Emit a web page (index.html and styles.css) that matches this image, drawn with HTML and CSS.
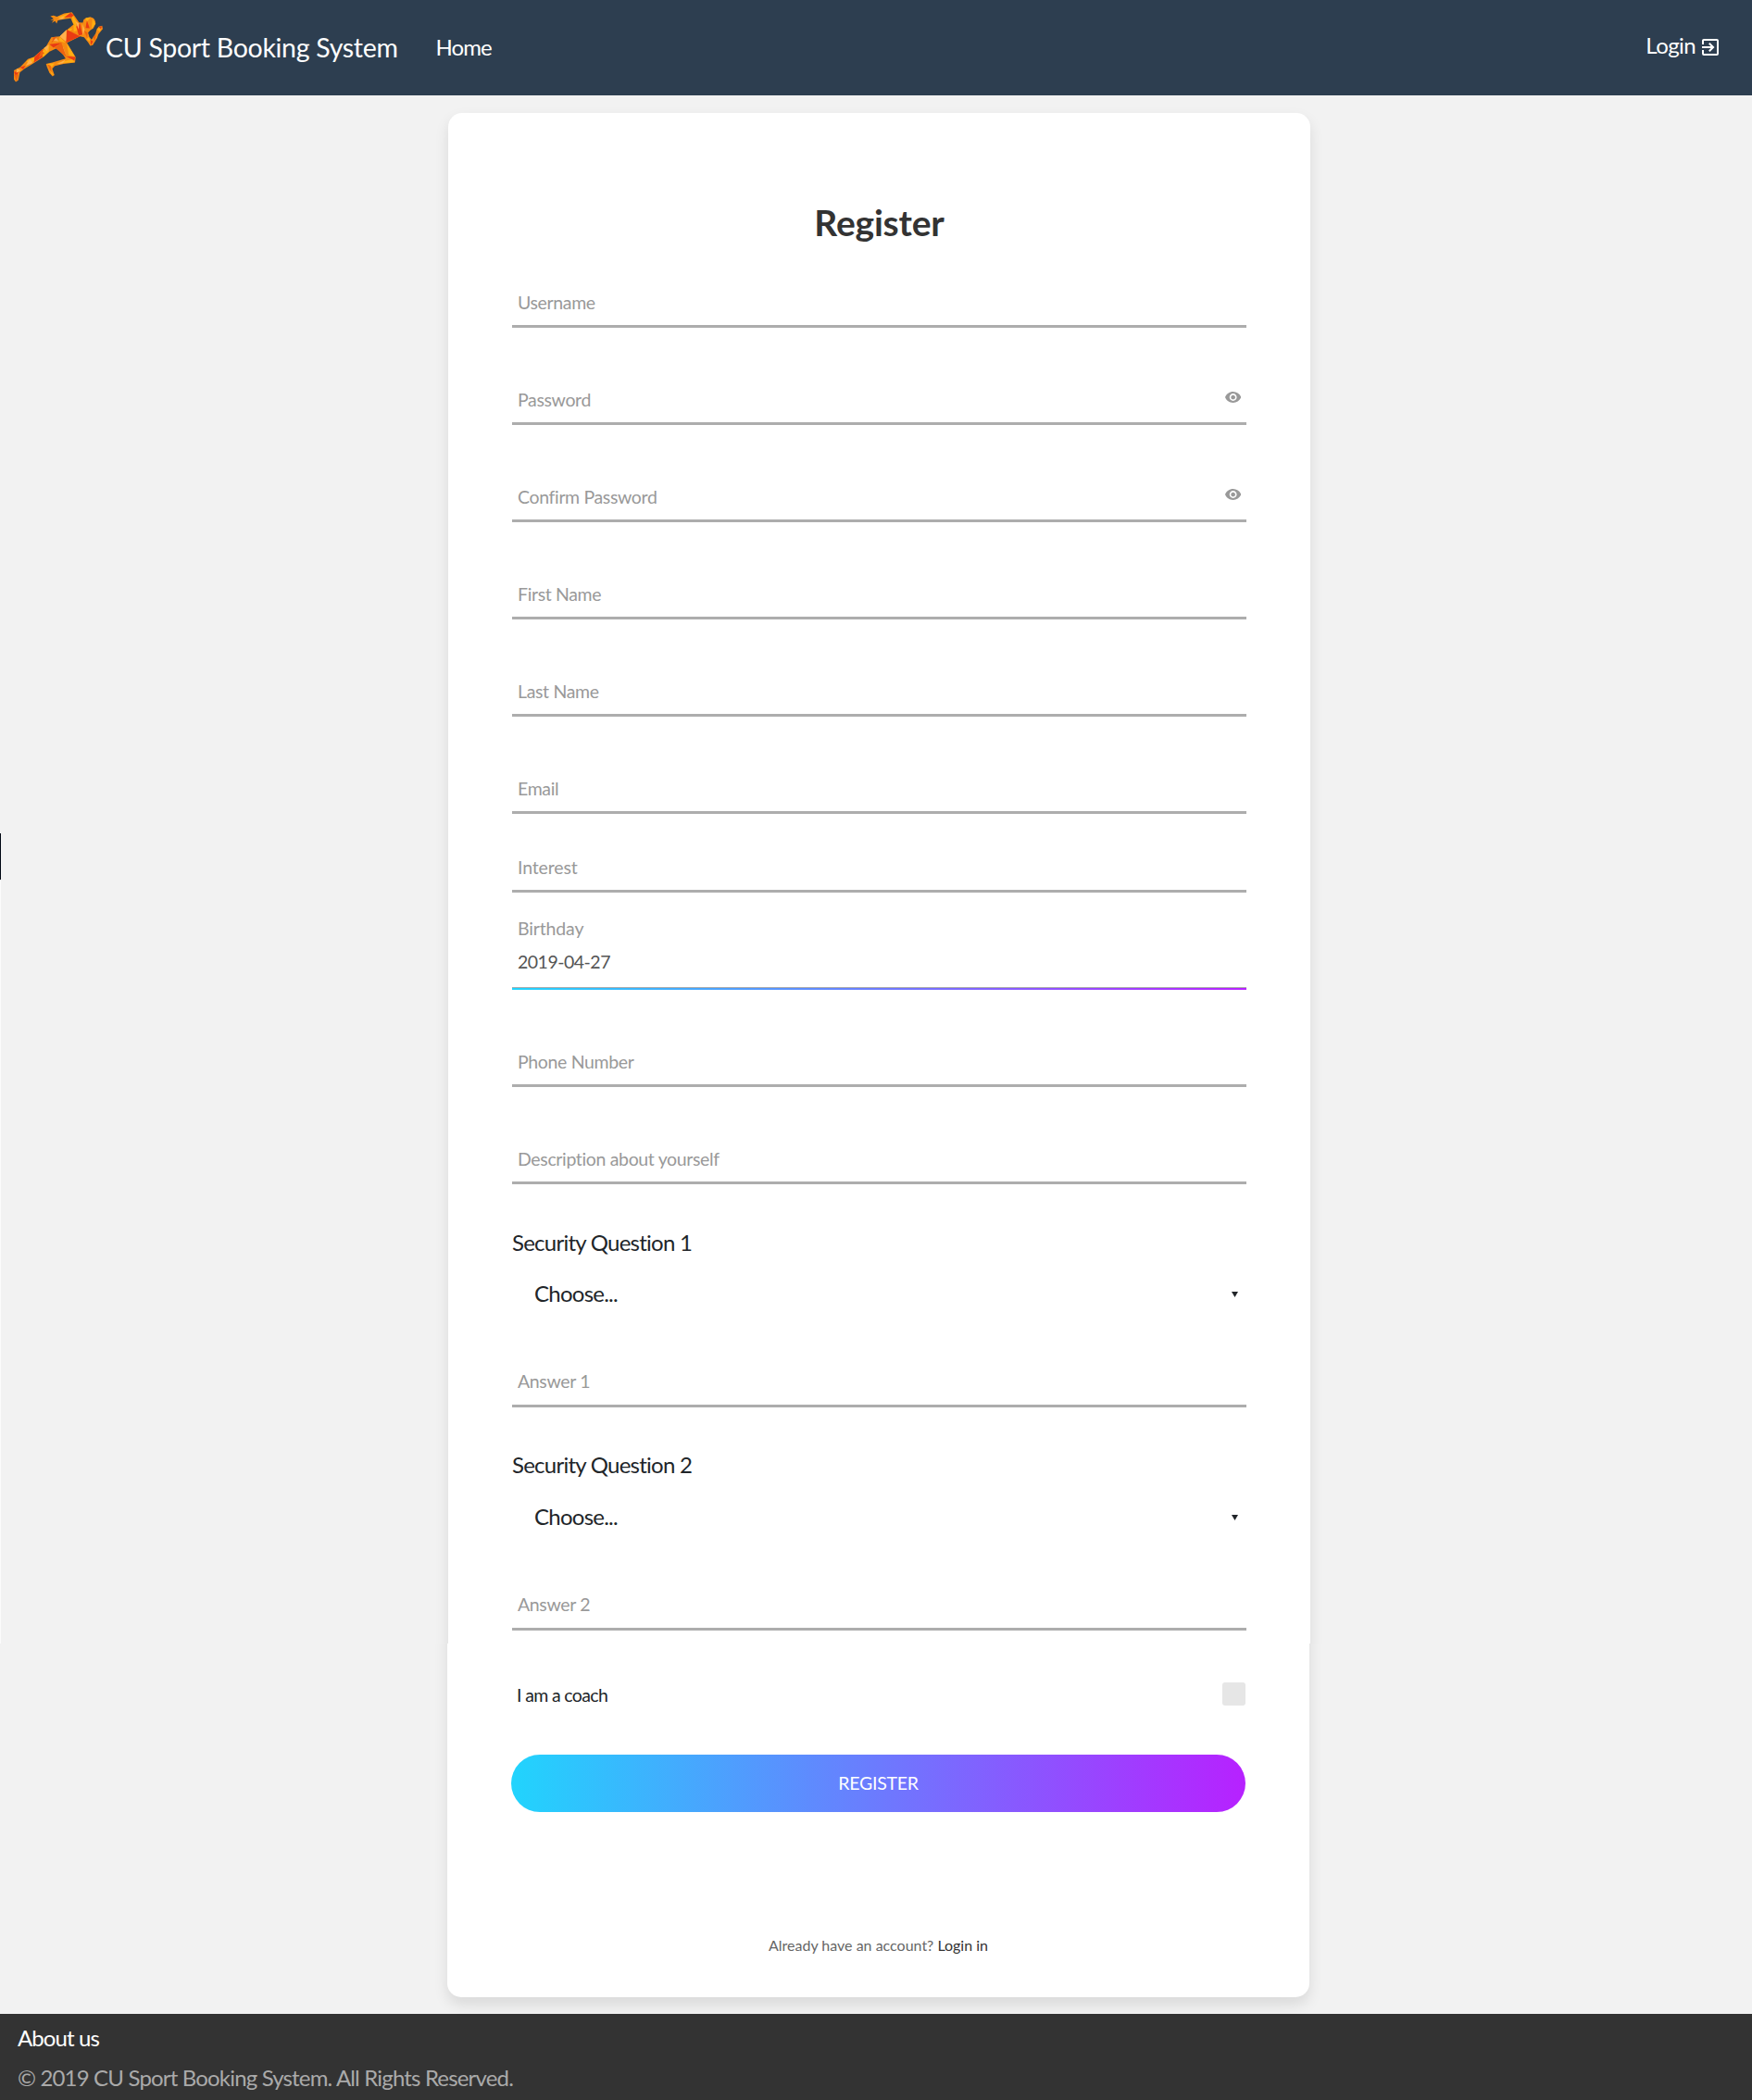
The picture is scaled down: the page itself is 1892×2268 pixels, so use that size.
FILE: index.html
```
<!DOCTYPE html>
<html lang="en">
<head>
<meta charset="utf-8">
<title>CU Sport Booking System - Register</title>
<link rel="stylesheet" href="styles.css">
</head>
<body>
<header class="navbar">
  <svg class="logo" viewBox="40 30 300 240" aria-hidden="true">
    <path fill="#f58a12" d="M163 52L173 50L184 54L207 43L232 40L239 49L255 72L267 73L270 63Q278 54 292 55Q308 58 308 76L301 91L290 98L284 105L288 119L295 127L308 108L312 94L318 86L329 83L331 93L317 110L313 122L299 145L291 147L284 136L271 120L258 117L216 138L244 184L242 201L205 205L177 212L169 221L176 241L170 245L160 234L152 215L149 205L169 201L212 188L204 176L184 155L160 166L141 183L101 208L80 221L65 233L60 258L52 263L46 255L46 226L66 216L91 190L110 183L150 148L166 120L193 117L220 93L237 79L228 59L206 62L187 66L183 76L178 68L167 74L174 64L163 66L173 60Z"/>
    <path fill="#ffae12" d="M186 55L228 41L206 61ZM232 44L246 68L246 90L234 70ZM237 80L258 96L238 102ZM220 94L236 91L215 110ZM276 58L292 56L277 74ZM298 60L308 76L295 94ZM286 119L294 137L279 126ZM312 94L326 86L322 103ZM160 143L158 166L141 182L132 172ZM193 118L212 138L190 132ZM216 140L242 182L222 177ZM110 184L120 193L93 205L86 196ZM180 204L235 190L240 200ZM152 205L176 204L168 216ZM160 224L175 242L167 239Z"/>
    <path fill="#e93b13" d="M216 95L258 117L213 137ZM258 75L266 111L254 114L246 86ZM228 41L239 49L231 55L207 56ZM160 142L199 138L173 153ZM138 158L137 183L110 201L112 184ZM66 216L83 211L76 223ZM213 181L243 183L240 195ZM291 128L300 133L293 145ZM318 87L329 84L324 93ZM280 65L289 91L276 90ZM46 230L61 233L52 247Z"/>
    <path fill="#ffb04e" d="M193 117L215 95L213 134ZM166 130L179 119L190 133ZM204 151L213 178L183 154ZM142 155L158 143L153 165ZM243 68L255 76L254 95ZM266 77L273 95L267 114ZM97 190L106 202L84 211ZM184 206L212 192L202 204ZM56 220L68 226L54 234ZM186 61L207 52L202 62Z"/>
    <path fill="#ee6410" d="M198 137L215 184L177 153ZM172 119L184 118L166 139ZM133 163L144 170L126 187ZM271 98L282 105L281 123ZM300 119L309 111L305 132ZM47 240L61 239L54 262ZM154 207L164 211L166 232Z"/>
  </svg>
  <a class="brand">CU Sport Booking System</a>
  <a class="nav-link">Home</a>
  <a class="login">Login
    <svg class="login-icon" viewBox="0 0 24 24"><path fill="currentColor" d="M19,3H5C3.89,3 3,3.89 3,5V9H5V5H19V19H5V15H3V19A2,2 0 0,0 5,21H19A2,2 0 0,0 21,19V5C21,3.89 20.1,3 19,3M10.08,15.58L11.5,17L16.5,12L11.5,7L10.08,8.41L12.67,11H3V13H12.67L10.08,15.58Z"/></svg>
  </a>
</header>
<div class="edge-handle"></div>
<main class="page">
  <section class="card card-main">
    <h1 class="title">Register</h1>
    <div class="field first"><span>Username</span></div>
    <div class="field"><span>Password</span>
      <svg class="eye" viewBox="1 4.5 22 15"><path fill="currentColor" d="M12 4.5C7 4.5 2.73 7.61 1 12c1.73 4.39 6 7.5 11 7.5s9.27-3.11 11-7.5c-1.73-4.39-6-7.5-11-7.5zM12 17c-2.76 0-5-2.24-5-5s2.24-5 5-5 5 2.24 5 5-2.24 5-5 5zm0-8c-1.66 0-3 1.34-3 3s1.34 3 3 3 3-1.34 3-3-1.34-3-3-3z"/></svg></div>
    <div class="field"><span>Confirm Password</span>
      <svg class="eye" viewBox="1 4.5 22 15"><path fill="currentColor" d="M12 4.5C7 4.5 2.73 7.61 1 12c1.73 4.39 6 7.5 11 7.5s9.27-3.11 11-7.5c-1.73-4.39-6-7.5-11-7.5zM12 17c-2.76 0-5-2.24-5-5s2.24-5 5-5 5 2.24 5 5-2.24 5-5 5zm0-8c-1.66 0-3 1.34-3 3s1.34 3 3 3 3-1.34 3-3-1.34-3-3-3z"/></svg></div>
    <div class="field"><span>First Name</span></div>
    <div class="field"><span>Last Name</span></div>
    <div class="field"><span>Email</span></div>
    <div class="field tight"><span>Interest</span></div>
    <div class="birthday">
      <span class="birthday-label">Birthday</span>
      <span class="birthday-value">2019-04-27</span>
      <div class="focus-line"></div>
    </div>
    <div class="field"><span>Phone Number</span></div>
    <div class="field"><span>Description about yourself</span></div>
    <div class="question">
      <span class="question-label">Security Question 1</span>
      <div class="select"><span>Choose...</span><svg class="caret" viewBox="0 0 7 6"><path d="M0 0H7L3.5 6Z"/></svg></div>
      <div class="field answer"><span>Answer 1</span></div>
    </div>
    <div class="question second">
      <span class="question-label">Security Question 2</span>
      <div class="select"><span>Choose...</span><svg class="caret" viewBox="0 0 7 6"><path d="M0 0H7L3.5 6Z"/></svg></div>
      <div class="field answer"><span>Answer 2</span></div>
    </div>
  </section>
  <section class="card card-end">
    <div class="coach"><span class="coach-label">I am a coach</span><span class="checkbox"></span></div>
    <button class="submit">REGISTER</button>
    <p class="account">Already have an account? <a class="account-link">Login in</a></p>
  </section>
</main>
<footer class="footer">
  <a class="about">About us</a>
  <span class="copyright">© 2019 CU Sport Booking System. All Rights Reserved.</span>
</footer>
</body>
</html>
```
FILE: styles.css
```
* { box-sizing: border-box; }
body {
  margin: 0;
  height: 2268px;
  display: flex;
  flex-direction: column;
  background: #f2f2f2;
  color: #212529;
  font: 24px/36px Lato, "Liberation Sans", sans-serif;
  letter-spacing: -.75px;
}
.navbar {
  height: 103px;
  display: flex;
  align-items: center;
  padding: 0 36px 2px 13px;
  background: #2d3e50;
  color: #fff;
}
.logo { width: 101px; height: 80.8px; }
.brand { font-size: 28.5px; letter-spacing: -.3px; }
.nav-link { margin-left: 41px; letter-spacing: -1px; }
.login {
  display: flex;
  align-items: center;
  gap: 4px;
  margin-left: auto;
  margin-right: -3px;
  padding-bottom: 4px;
  letter-spacing: -.6px;
}
.login-icon { width: 24px; height: 24px; margin-top: 4px; }

/* Sliver of the side panel showing at the window edge */
.edge-handle {
  position: absolute;
  left: 0;
  top: 900px;
  width: 1px;
  height: 875px;
  background: linear-gradient(#000814 50px, #fcfcfc 50px);
}

.page { height: 2072px; padding: 19px 0 0 484px; }

/* Each card section runs 60px past the joint and is clipped there,
   so the side shadows keep full strength along the whole height */
.card {
  width: 931px;
  background: #fff;
  box-shadow: 0 7.5px 15px rgba(0, 0, 0, .1);
}
.card-main {
  height: 1713px;
  padding: 88px 69px 0;
  border-radius: 15px 15px 0 0;
  clip-path: inset(-30px -30px 60px -30px);
}
.card-end {
  height: 442px;
  margin: -120px 0 0 -1px;
  padding: 102px 69px 0;
  border-radius: 0 0 15px 15px;
  clip-path: inset(60px -30px -30px -30px);
}
.title {
  margin: 0;
  color: #333;
  font-size: 39px;
  font-weight: 700;
  line-height: 60px;
  letter-spacing: -.2px;
  text-align: center;
}
.field {
  display: flex;
  align-items: center;
  justify-content: space-between;
  height: 52px;
  margin-top: 53px;
  padding: 0 6px;
  border-bottom: 3px solid #adadad;
  color: #999;
  font-size: 19.5px;
  letter-spacing: -.35px;
}
.first { margin-top: 32px; }
.tight { margin-top: 33px; letter-spacing: -.15px; }
.eye { width: 17.3px; height: 12px; margin-bottom: 5px; }
.birthday {
  display: flex;
  flex-direction: column;
  height: 105px;
  padding-top: 23px;
  font-size: 19.5px;
  letter-spacing: -.15px;
}
.birthday-label { padding-left: 6px; line-height: 31px; color: #999; }
.birthday-value { padding-left: 6px; line-height: 41px; color: #555; letter-spacing: -.5px; }
.focus-line {
  height: 3px;
  margin-top: auto;
  border-top: 1px solid #adadad;
  background: linear-gradient(90deg, #21d4fd, #b721ff);
}
.question { height: 241px; padding-top: 45px; }
.question-label { display: block; }
.select {
  display: flex;
  align-items: center;
  justify-content: space-between;
  height: 36px;
  margin-top: 19px;
  padding: 0 9px 0 24px;
}
.second { padding-top: 44px; }
.second .select { margin-top: 20px; }
.caret { width: 7px; height: 6px; fill: #212529; margin-top: 1px; }
.answer { height: 54px; margin-top: 51px; }
.coach {
  display: flex;
  align-items: center;
  justify-content: space-between;
  height: 25px;
  padding-left: 6px;
  font-size: 19.5px;
  letter-spacing: -.65px;
}
.coach-label { padding-top: 2px; }
.checkbox { width: 25px; height: 25px; border-radius: 3px; background: #e6e6e6; }
.submit {
  display: block;
  width: 100%;
  height: 62px;
  margin-top: 53px;
  padding: 0 0 2px;
  border: 0;
  border-radius: 31px;
  background: linear-gradient(90deg, #21d4fd, #b721ff);
  color: #fff;
  font: 19.5px Lato, sans-serif;
  letter-spacing: -.25px;
}
.account {
  margin: 132px 0 0;
  color: #666;
  font-size: 16px;
  line-height: 24px;
  letter-spacing: 0;
  text-align: center;
}
.account-link { color: #333; }
.footer {
  display: flex;
  flex-direction: column;
  gap: 7px;
  height: 93px;
  padding: 8px 19px 0;
  background: #333;
  color: #aaa;
}
.about { color: #fff; letter-spacing: -.9px; }
.copyright { letter-spacing: -.83px; }
```
